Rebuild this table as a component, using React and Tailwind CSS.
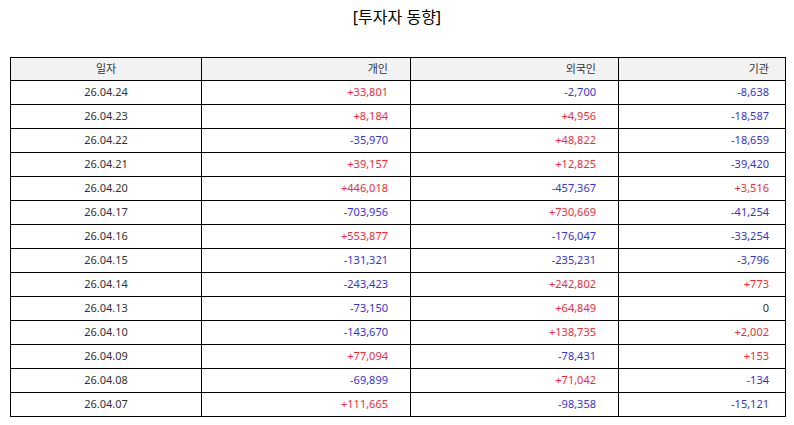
import React from 'react';

const rows = [
  ['26.04.24', '+33,801', '-2,700', '-8,638'],
  ['26.04.23', '+8,184', '+4,956', '-18,587'],
  ['26.04.22', '-35,970', '+48,822', '-18,659'],
  ['26.04.21', '+39,157', '+12,825', '-39,420'],
  ['26.04.20', '+446,018', '-457,367', '+3,516'],
  ['26.04.17', '-703,956', '+730,669', '-41,254'],
  ['26.04.16', '+553,877', '-176,047', '-33,254'],
  ['26.04.15', '-131,321', '-235,231', '-3,796'],
  ['26.04.14', '-243,423', '+242,802', '+773'],
  ['26.04.13', '-73,150', '+64,849', '0'],
  ['26.04.10', '-143,670', '+138,735', '+2,002'],
  ['26.04.09', '+77,094', '-78,431', '+153'],
  ['26.04.08', '-69,899', '+71,042', '-134'],
  ['26.04.07', '+111,665', '-98,358', '-15,121'],
];

const tone = (v) =>
  v.startsWith('+') ? 'text-[#e8303a]' : v.startsWith('-') ? 'text-[#3a33cc]' : 'text-[#333]';

export default function App() {
  return (
    <div className="w-[794px] h-[425px] bg-white text-[#333] font-['Noto_Sans','Noto_Sans_CJK_KR',sans-serif]">
      <h1 className="pt-[5px] h-[57px] text-center text-[16px] text-black leading-[24px]">[투자자 동향]</h1>
      <table className="ml-[10px] w-[775px] border-collapse text-[11px] table-fixed">
        <colgroup>
          <col className="w-[191px]" />
          <col className="w-[209px]" />
          <col className="w-[208px]" />
          <col className="w-[167px]" />
        </colgroup>
        <thead>
          <tr className="h-[23px] bg-[#f2f2f2]">
            <th className="border border-black font-normal text-center">일자</th>
            <th className="border border-black font-normal text-right pr-[22px]">개인</th>
            <th className="border border-black font-normal text-right pr-[22px]">외국인</th>
            <th className="border border-black font-normal text-right pr-[16px]">기관</th>
          </tr>
        </thead>
        <tbody>
          {rows.map((r) => (
            <tr key={r[0]} className="h-[24px]">
              <td className="border border-black text-center">{r[0]}</td>
              <td className={`border border-black text-right pr-[22px] ${tone(r[1])}`}>{r[1]}</td>
              <td className={`border border-black text-right pr-[22px] ${tone(r[2])}`}>{r[2]}</td>
              <td className={`border border-black text-right pr-[16px] ${tone(r[3])}`}>{r[3]}</td>
            </tr>
          ))}
        </tbody>
      </table>
    </div>
  );
}
